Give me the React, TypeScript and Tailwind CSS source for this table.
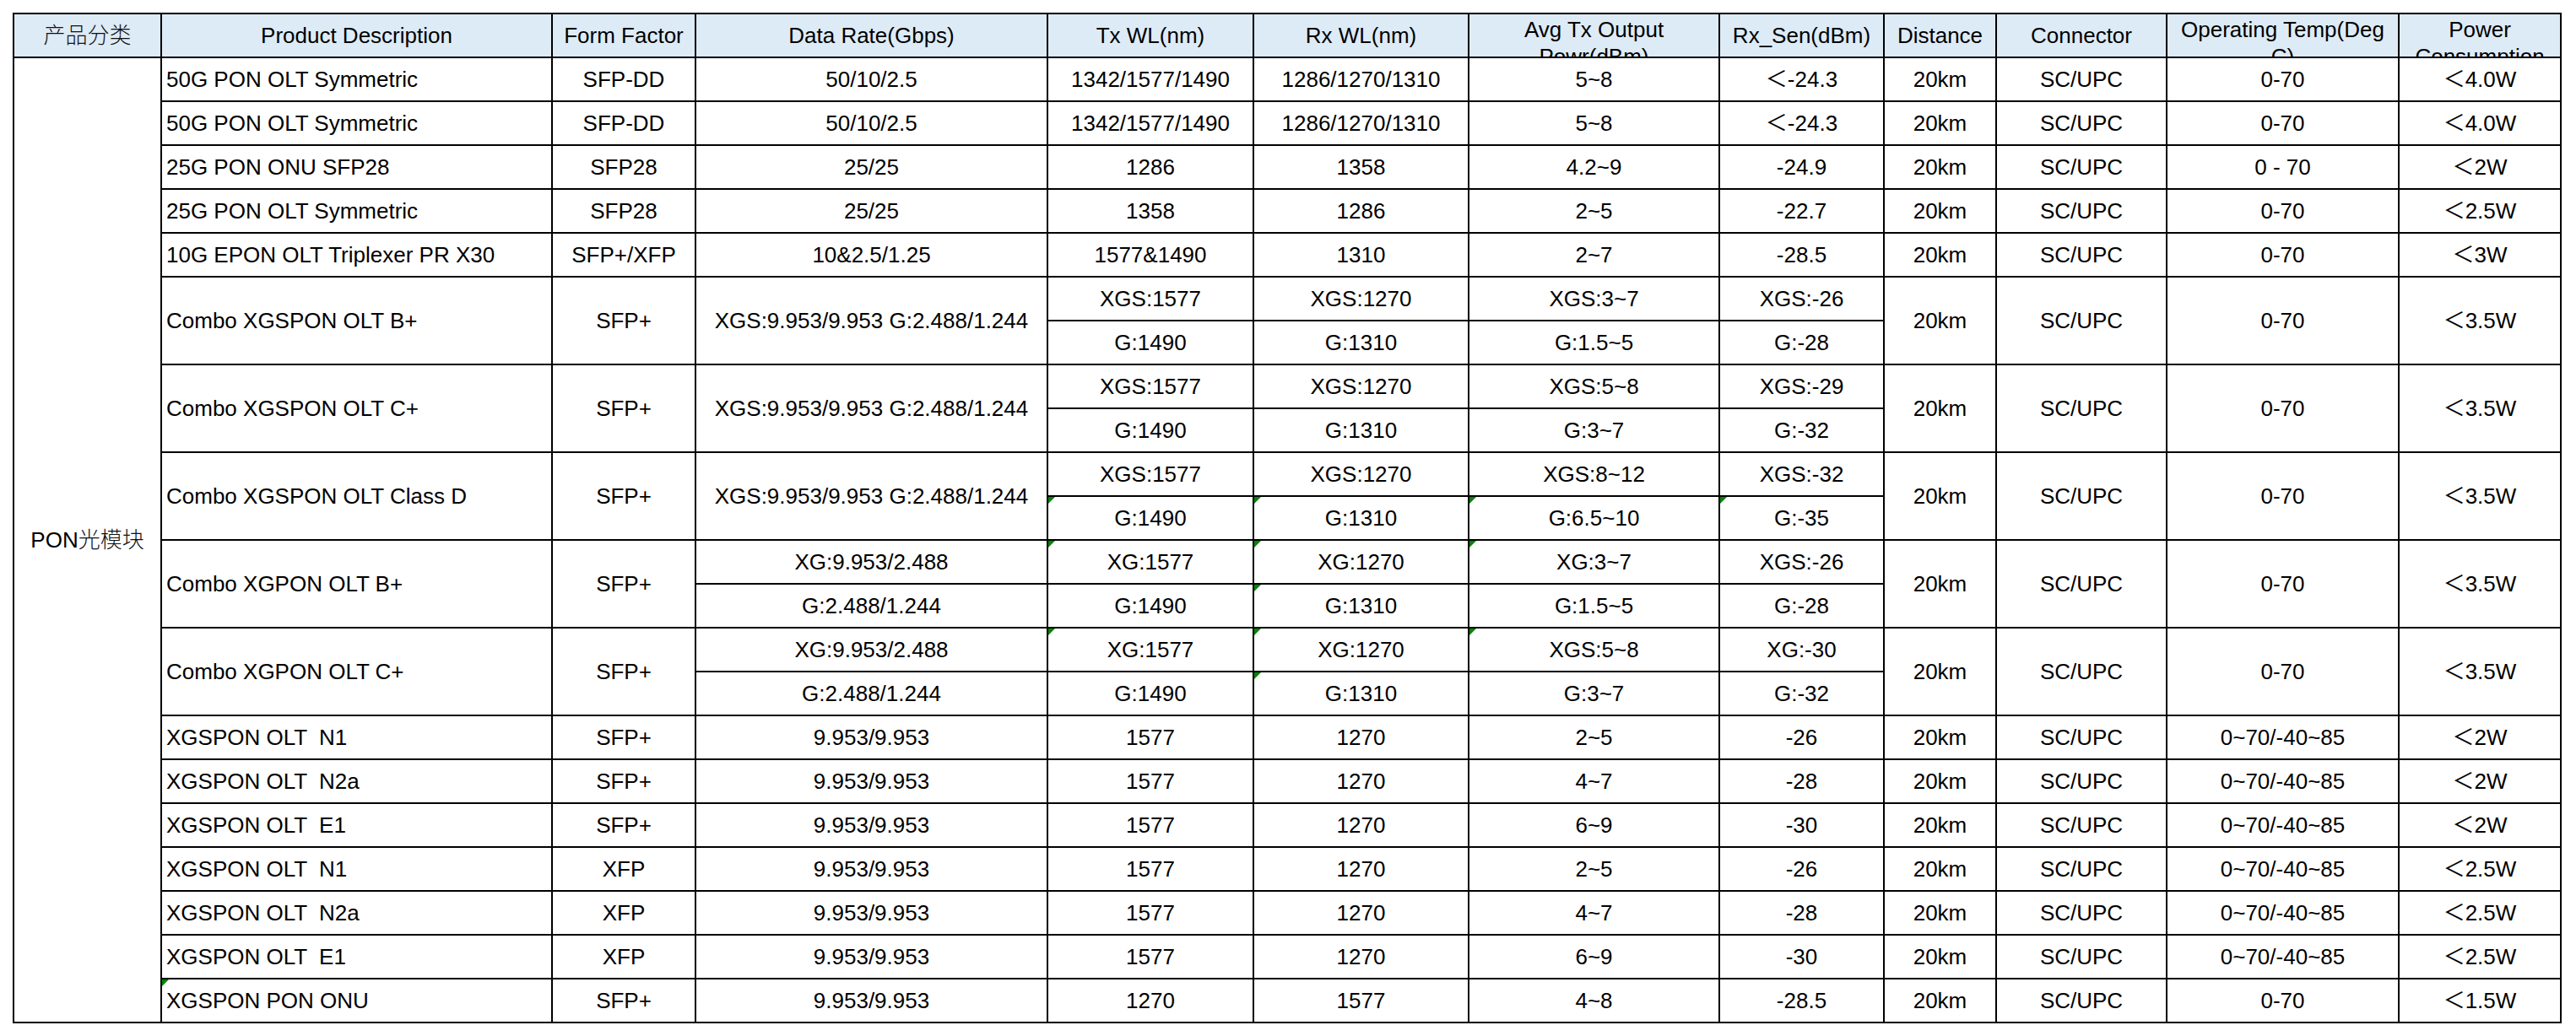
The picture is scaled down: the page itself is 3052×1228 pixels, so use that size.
import React from "react";

type C = { t: string; span?: number; tri?: boolean; left?: boolean };

const LT = "＜";

const single = (
  desc: string,
  ff: string,
  dr: string,
  tx: string,
  rx: string,
  avg: string,
  sen: string,
  temp: string,
  pw: string,
  tri = false
): C[] => [
  { t: desc, left: true, tri },
  { t: ff },
  { t: dr },
  { t: tx },
  { t: rx },
  { t: avg },
  { t: sen },
  { t: "20km" },
  { t: "SC/UPC" },
  { t: temp },
  { t: pw },
];

const combo = (
  desc: string,
  dr: string | [string, string],
  tx: [string, string],
  rx: [string, string],
  avg: [string, string],
  sen: [string, string],
  tri1: boolean[],
  tri2: boolean[]
): C[] => {
  const splitDr = Array.isArray(dr);
  const first: C[] = [
    { t: desc, span: 2, left: true },
    { t: "SFP+", span: 2 },
    splitDr ? { t: (dr as [string, string])[0] } : { t: dr as string, span: 2 },
    { t: tx[0], tri: tri1[0] },
    { t: rx[0], tri: tri1[1] },
    { t: avg[0], tri: tri1[2] },
    { t: sen[0], tri: tri1[3] },
    { t: "20km", span: 2 },
    { t: "SC/UPC", span: 2 },
    { t: "0-70", span: 2 },
    { t: LT + "3.5W", span: 2 },
  ];
  const second: C[] = [
    ...(splitDr ? [{ t: (dr as [string, string])[1] }] : []),
    { t: tx[1], tri: tri2[0] },
    { t: rx[1], tri: tri2[1] },
    { t: avg[1], tri: tri2[2] },
    { t: sen[1], tri: tri2[3] },
  ];
  return [...first, ...second];
};

const N = [false, false, false, false];
const XGS_DR = "XGS:9.953/9.953 G:2.488/1.244";
const XG_DR: [string, string] = ["XG:9.953/2.488", "G:2.488/1.244"];

const body: C[] = [
  ...single("50G PON OLT Symmetric", "SFP-DD", "50/10/2.5", "1342/1577/1490", "1286/1270/1310", "5~8", LT + "-24.3", "0-70", LT + "4.0W"),
  ...single("50G PON OLT Symmetric", "SFP-DD", "50/10/2.5", "1342/1577/1490", "1286/1270/1310", "5~8", LT + "-24.3", "0-70", LT + "4.0W"),
  ...single("25G PON ONU SFP28", "SFP28", "25/25", "1286", "1358", "4.2~9", "-24.9", "0 - 70", LT + "2W"),
  ...single("25G PON OLT Symmetric", "SFP28", "25/25", "1358", "1286", "2~5", "-22.7", "0-70", LT + "2.5W"),
  ...single("10G EPON OLT Triplexer PR X30", "SFP+/XFP", "10&2.5/1.25", "1577&1490", "1310", "2~7", "-28.5", "0-70", LT + "3W"),
  ...combo("Combo XGSPON OLT B+", XGS_DR, ["XGS:1577", "G:1490"], ["XGS:1270", "G:1310"], ["XGS:3~7", "G:1.5~5"], ["XGS:-26", "G:-28"], N, N),
  ...combo("Combo XGSPON OLT C+", XGS_DR, ["XGS:1577", "G:1490"], ["XGS:1270", "G:1310"], ["XGS:5~8", "G:3~7"], ["XGS:-29", "G:-32"], N, N),
  ...combo("Combo XGSPON OLT Class D", XGS_DR, ["XGS:1577", "G:1490"], ["XGS:1270", "G:1310"], ["XGS:8~12", "G:6.5~10"], ["XGS:-32", "G:-35"], N, [true, true, true, true]),
  ...combo("Combo XGPON OLT B+", XG_DR, ["XG:1577", "G:1490"], ["XG:1270", "G:1310"], ["XG:3~7", "G:1.5~5"], ["XGS:-26", "G:-28"], [true, true, true, false], [false, true, false, false]),
  ...combo("Combo XGPON OLT C+", XG_DR, ["XG:1577", "G:1490"], ["XG:1270", "G:1310"], ["XGS:5~8", "G:3~7"], ["XG:-30", "G:-32"], [true, true, true, false], [false, true, false, false]),
  ...single("XGSPON OLT  N1", "SFP+", "9.953/9.953", "1577", "1270", "2~5", "-26", "0~70/-40~85", LT + "2W"),
  ...single("XGSPON OLT  N2a", "SFP+", "9.953/9.953", "1577", "1270", "4~7", "-28", "0~70/-40~85", LT + "2W"),
  ...single("XGSPON OLT  E1", "SFP+", "9.953/9.953", "1577", "1270", "6~9", "-30", "0~70/-40~85", LT + "2W"),
  ...single("XGSPON OLT  N1", "XFP", "9.953/9.953", "1577", "1270", "2~5", "-26", "0~70/-40~85", LT + "2.5W"),
  ...single("XGSPON OLT  N2a", "XFP", "9.953/9.953", "1577", "1270", "4~7", "-28", "0~70/-40~85", LT + "2.5W"),
  ...single("XGSPON OLT  E1", "XFP", "9.953/9.953", "1577", "1270", "6~9", "-30", "0~70/-40~85", LT + "2.5W"),
  ...single("XGSPON PON ONU", "SFP+", "9.953/9.953", "1270", "1577", "4~8", "-28.5", "0-70", LT + "1.5W", true),
];

const headers: { t: string; wrap?: boolean; cjk?: boolean }[] = [
  { t: "产品分类", cjk: true },
  { t: "Product Description" },
  { t: "Form Factor" },
  { t: "Data Rate(Gbps)" },
  { t: "Tx WL(nm)" },
  { t: "Rx WL(nm)" },
  { t: "Avg Tx Output Powr(dBm)", wrap: true },
  { t: "Rx_Sen(dBm)" },
  { t: "Distance" },
  { t: "Connector" },
  { t: "Operating Temp(Deg C)", wrap: true },
  { t: "Power Consumption", wrap: true },
];

const base = "relative border-r-2 border-b-2 border-black overflow-hidden";

function Tri() {
  return <span className="absolute top-0 left-0 w-[8px] h-[8px] bg-[#0a820a] [clip-path:polygon(0_0,100%_0,0_100%)]" />;
}

export default function App() {
  return (
    <div className="w-[3052px] h-[1228px] bg-white pt-[15px] pl-[15px] text-black font-['Liberation_Sans','Noto_Sans_CJK_SC',sans-serif] text-[26px]">
      <div className="grid w-max grid-cols-[175px_463px_170px_417px_244px_255px_297px_195px_133px_202px_275px_192px] auto-rows-[52px] border-l-2 border-t-2 border-black">
        {headers.map((h, i) =>
          h.wrap ? (
            <div key={"h" + i} className={base + " bg-[#DDEBF7] text-center leading-[32px] pt-[2px] px-[2px]"}>
              {h.t}
            </div>
          ) : (
            <div key={"h" + i} className={base + " bg-[#DDEBF7] flex items-center justify-center whitespace-pre"}>
              {h.cjk ? <span className="font-light text-[#111]">{h.t}</span> : h.t}
            </div>
          )
        )}
        <div className={base + " row-span-22 flex items-center justify-center"}>
          PON<span className="font-light text-[#111]">光模块</span>
        </div>
        {body.map((c, i) => {
          const span = c.span === 2 ? " row-span-2" : "";
          const align = c.left ? " justify-start pl-[5px]" : " justify-center";
          return (
            <div key={i} className={base + span + align + " flex items-center whitespace-pre"}>
              {c.tri && <Tri />}
              {c.t}
            </div>
          );
        })}
      </div>
    </div>
  );
}
